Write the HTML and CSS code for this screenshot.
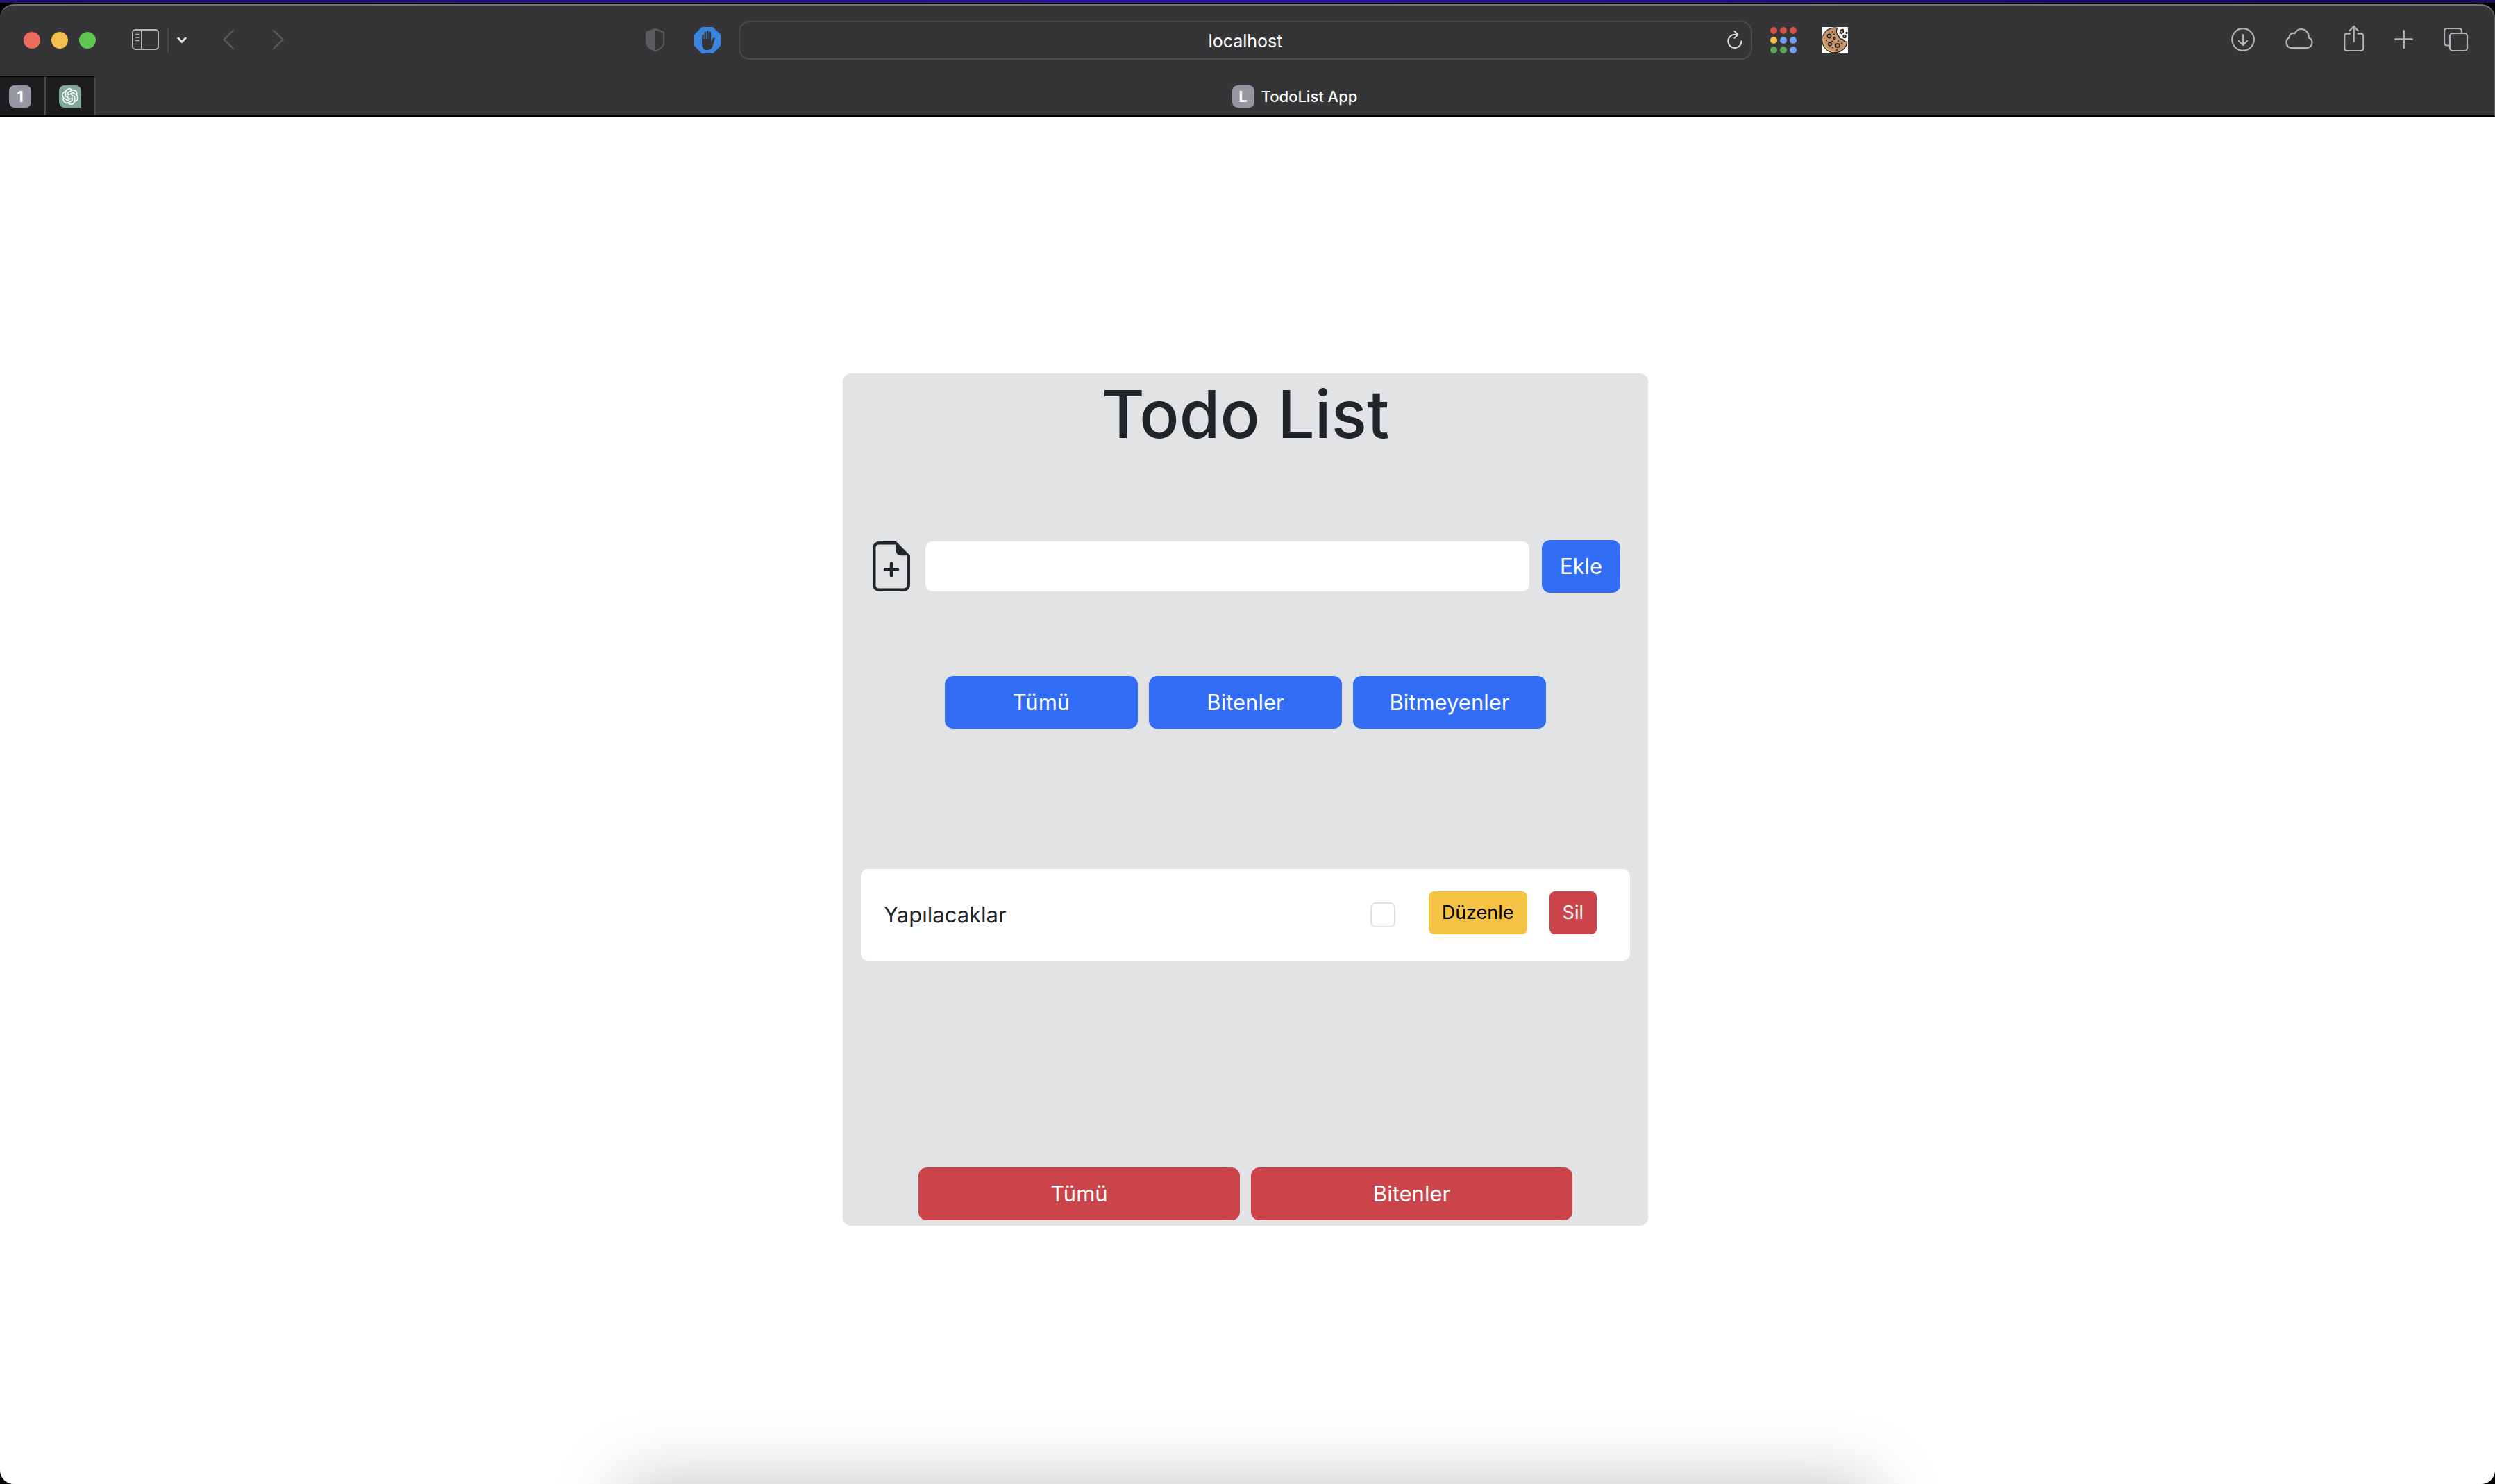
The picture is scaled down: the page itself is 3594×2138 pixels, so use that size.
FILE: index.html
```html
<!DOCTYPE html>
<html lang="tr">
<head>
<meta charset="utf-8">
<title>TodoList App</title>
<meta name="viewport" content="width=device-width, initial-scale=1">
<link rel="stylesheet" href="styles.css">
</head>
<body>
<div class="window">
  <header class="chrome">
    <div class="toolbar">
      <div class="toolbar-left">
        <div class="lights">
          <button class="light light-close" aria-label="Close"></button>
          <button class="light light-min" aria-label="Minimize"></button>
          <button class="light light-full" aria-label="Full screen"></button>
        </div>
        <div class="sidebar-tools">
          <button class="tool" aria-label="Sidebar">
            <svg width="39" height="44" viewBox="0 0 39 44" fill="none" stroke="#b4b4b8" stroke-width="2"><rect x="1" y="7" width="37" height="28" rx="4"/><path d="M14 7v28"/><path d="M5.500 13.500h4.500M5.500 18h4.500M5.500 22.500h4.500" stroke-width="1.600" stroke-linecap="round"/></svg>
          </button>
          <span class="tool-divider"></span>
          <button class="tool" aria-label="Tab groups">
            <svg width="14" height="44" viewBox="0 0 14 44" fill="none" stroke="#e4e4e6" stroke-width="3" stroke-linecap="round" stroke-linejoin="round"><path d="M1.800 19 7 24.400 12.200 19"/></svg>
          </button>
        </div>
        <nav class="history" aria-label="History">
          <button class="tool" aria-label="Back">
            <svg width="16" height="44" viewBox="0 0 16 44" fill="none" stroke="#5b5b5f" stroke-width="2.400" stroke-linecap="round" stroke-linejoin="round"><path d="M15 8 1.500 21 15 34"/></svg>
          </button>
          <button class="tool" aria-label="Forward">
            <svg width="16" height="44" viewBox="0 0 16 44" fill="none" stroke="#5b5b5f" stroke-width="2.400" stroke-linecap="round" stroke-linejoin="round"><path d="M1 8 14.500 21 1 34"/></svg>
          </button>
        </nav>
        <div class="extensions">
          <button class="tool" aria-label="Privacy report">
            <svg width="28" height="44" viewBox="0 0 28 44"><path d="M14 6.200 25.300 10q1 .4 1 1.500v13c0 7-5.300 9.500-12.300 13C7 34 1.200 31.500 1.200 24.500v-13Q1.200 10.400 2.200 10Z" fill="none" stroke="#5b5b5f" stroke-width="2"/><path d="M14 5.200 1.700 9.200Q.2 10 .2 11.500v13c0 7.500 6 10.500 13.800 13.800Z" fill="#5b5b5f"/></svg>
          </button>
          <button class="tool" aria-label="Ad blocker">
            <svg width="38" height="44" viewBox="0 0 38 44"><path d="M11 3h16l11 11v16L27 41H11L0 30V14Z" fill="#3984e0"/><g stroke="#353537" stroke-width="2.600" stroke-linecap="round" fill="none"><path d="M12.500 15v14M15.900 11v15M19.400 9.500V26M22.900 11v15"/></g><path d="M11.200 20h13v4.500l2.500-5q1-1.700 3.300-.8l-3.700 12.500c-1 3.200-3.600 4.800-7.300 4.800-5 0-7.800-2.500-7.800-7.500Z" fill="#353537"/></svg>
          </button>
        </div>
      </div>
      <div class="address">
        <input class="address-input" type="text" value="localhost" aria-label="Address">
        <button class="tool reload" aria-label="Reload">
          <svg width="22" height="44" viewBox="0 0 22 44" fill="none" stroke="#dededf" stroke-width="2" stroke-linecap="round" stroke-linejoin="round"><path d="M14.500 13.800H11A9.600 9.600 0 1 0 20.500 23.300M10.500 9l5 4.800-5 5"/></svg>
        </button>
      </div>
      <div class="toolbar-right">
        <div class="extensions">
          <button class="tool" aria-label="Apps">
            <svg width="38" height="44" viewBox="0 0 38 44"><g fill="#d95140"><circle cx="5" cy="8" r="5"/><circle cx="19" cy="8" r="5"/><circle cx="33" cy="8" r="5"/></g><circle cx="5" cy="22" r="5" fill="#f2bf42"/><g fill="#729ef1"><circle cx="19" cy="22" r="5"/><circle cx="33" cy="22" r="5"/><circle cx="33" cy="36" r="5"/></g><g fill="#58a55c"><circle cx="5" cy="36" r="5"/><circle cx="19" cy="36" r="5"/></g></svg>
          </button>
          <button class="tool" aria-label="Cookies">
            <svg width="38" height="44" viewBox="0 0 38 44"><path d="M0 3h38v38H0z" fill="#fff"/><path d="M22.500 4.300A18 18 0 1 0 36.800 24.300c-3.300.2-5-1-6.300-4-3 .4-5-1-5.500-4-3.500-2-4.500-7-2.500-12Z" fill="#c6936f" stroke="#241a17" stroke-width="1.200"/><path d="M3 16c-3 11 4 21 14 22.500" fill="none" stroke="#e3b172" stroke-width="2"/><g fill="#b57f5c" stroke="#241a17" stroke-width="1.400"><circle cx="11" cy="16" r="2.700"/><circle cx="12" cy="27.500" r="2.200"/><circle cx="23" cy="29.500" r="2.800"/><circle cx="18.500" cy="19" r="1.300"/><path d="m27 7.500 4-1 .5 4-3 2-2-2Z"/><circle cx="33" cy="16.500" r="2"/><circle cx="36" cy="11.500" r="1"/></g><g fill="#241a17"><circle cx="16" cy="10" r="1"/><circle cx="18" cy="13.500" r="1"/><circle cx="7" cy="22" r="1"/><circle cx="15" cy="23.500" r="1"/><circle cx="24" cy="23" r="1"/><circle cx="29" cy="26.500" r="1"/><circle cx="16" cy="32.500" r="1"/><circle cx="22" cy="36" r="1"/></g></svg>
          </button>
        </div>
        <div class="actions">
          <button class="tool" aria-label="Downloads">
            <svg width="34" height="44" viewBox="0 0 34 44" fill="none" stroke="#b4b4b8" stroke-width="2.200" stroke-linecap="round" stroke-linejoin="round"><circle cx="17" cy="21" r="15.800"/><path d="M17 14v14M11 23l6 6 6-6"/></svg>
          </button>
          <button class="tool" aria-label="iCloud tabs">
            <svg width="42" height="44" viewBox="0 0 42 44" fill="none" stroke="#b4b4b8" stroke-width="2.200" stroke-linejoin="round"><path d="M9 33A8 8 0 0 1 6.500 18.200C6.500 13 11 11 14.500 12.300 17 7.500 21 6 24 6c6 0 10.800 4.500 10.800 12.500C38 19.500 39.500 22.500 39.500 25.500c0 4-3 7.500-7.500 7.500Z"/></svg>
          </button>
          <button class="tool" aria-label="Share">
            <svg width="30" height="44" viewBox="0 0 30 44" fill="none" stroke="#b4b4b8" stroke-width="2.200" stroke-linecap="round" stroke-linejoin="round"><path d="M9 12.700H5q-3.800 0-3.800 3.800v16.700q0 3.800 3.800 3.800h19.500q3.800 0 3.800-3.800V16.500q0-3.800-3.800-3.800h-4M14.700 24V2.500M8.500 8.200l6.200-6.200 6.200 6.200"/></svg>
          </button>
          <button class="tool" aria-label="New tab">
            <svg width="28" height="44" viewBox="0 0 28 44" fill="none" stroke="#b4b4b8" stroke-width="2.800" stroke-linecap="round"><path d="M13.500 8.500v24.500M1.500 20.700h24"/></svg>
          </button>
          <button class="tool" aria-label="Tab overview">
            <svg width="36" height="44" viewBox="0 0 36 44" fill="none" stroke="#b4b4b8" stroke-width="2.200"><rect x="9" y="12" width="25" height="25" rx="4"/><path d="M9 29.500H5q-4 0-4-4V9q0-4 4-4h17q4 0 4 4v3"/></svg>
          </button>
        </div>
      </div>
    </div>
    <div class="tabs">
      <button class="pinned pinned-first"><span class="badge">1</span></button>
      <button class="pinned" aria-label="ChatGPT">
        <svg width="32" height="32" viewBox="0 0 32 32"><path d="M8 0h16a8 8 0 0 1 8 8v24H8a8 8 0 0 1-8-8V8a8 8 0 0 1 8-8Z" fill="#80a79c"/><g transform="translate(4 4)" fill="#fff"><path d="M22.282 9.821a5.985 5.985 0 0 0-.516-4.910 6.046 6.046 0 0 0-6.510-2.900A6.065 6.065 0 0 0 4.981 4.182a5.985 5.985 0 0 0-3.998 2.900 6.046 6.046 0 0 0 .743 7.097 5.980 5.980 0 0 0 .510 4.911 6.051 6.051 0 0 0 6.515 2.900A5.985 5.985 0 0 0 13.260 24a6.056 6.056 0 0 0 5.772-4.206 5.990 5.990 0 0 0 3.997-2.900 6.056 6.056 0 0 0-.747-7.073zM13.260 22.430a4.476 4.476 0 0 1-2.876-1.040l.141-.081 4.779-2.758a.795.795 0 0 0 .392-.681v-6.737l2.020 1.168a.071.071 0 0 1 .038.052v5.583a4.504 4.504 0 0 1-4.494 4.494zM3.600 18.304a4.470 4.470 0 0 1-.535-3.014l.142.085 4.783 2.759a.771.771 0 0 0 .780 0l5.843-3.369v2.332a.080.080 0 0 1-.033.062L9.740 19.950a4.499 4.499 0 0 1-6.140-1.646zM2.340 7.896a4.485 4.485 0 0 1 2.366-1.973V11.600a.766.766 0 0 0 .388.676l5.815 3.355-2.020 1.168a.076.076 0 0 1-.071 0l-4.830-2.786A4.504 4.504 0 0 1 2.340 7.872zm16.597 3.855l-5.833-3.387L15.119 7.200a.076.076 0 0 1 .071 0l4.830 2.791a4.494 4.494 0 0 1-.676 8.105v-5.678a.790.790 0 0 0-.407-.667zm2.010-3.023l-.141-.085-4.774-2.782a.776.776 0 0 0-.785 0L9.409 9.230V6.897a.066.066 0 0 1 .028-.061l4.830-2.787a4.499 4.499 0 0 1 6.680 4.660zM8.307 12.863l-2.020-1.164a.080.080 0 0 1-.038-.057V6.075a4.499 4.499 0 0 1 7.375-3.453l-.142.080L8.704 5.460a.795.795 0 0 0-.393.681zm1.097-2.365l2.602-1.500 2.607 1.500v2.999l-2.597 1.500-2.607-1.500z"/></g></svg>
      </button>
      <button class="tab"><span class="badge">L</span>TodoList App</button>
    </div>
  </header>

  <main class="page">
    <section class="todo">
      <h1 class="todo-title">Todo List</h1>
      <form class="todo-form">
        <label class="todo-label" for="todo" aria-label="Yeni todo">
          <svg width="72" height="72" viewBox="0 0 16 16" fill="#212529"><path d="M8 6.500a.5.5 0 0 1 .5.5v1.500H10a.5.5 0 0 1 0 1H8.500V11a.5.5 0 0 1-1 0V9.500H6a.5.5 0 0 1 0-1h1.500V7a.5.5 0 0 1 .5-.5z"/><path d="M14 4.500V14a2 2 0 0 1-2 2H4a2 2 0 0 1-2-2V2a2 2 0 0 1 2-2h5.500L14 4.500zm-3 0A1.500 1.500 0 0 1 9.500 3V1H4a1 1 0 0 0-1 1v12a1 1 0 0 0 1 1h8a1 1 0 0 0 1-1V4.500h-2z"/></svg>
        </label>
        <input class="todo-input" id="todo" type="text">
        <button class="btn btn-primary btn-add" type="button">Ekle</button>
      </form>
      <div class="filters">
        <button class="btn btn-primary">Tümü</button>
        <button class="btn btn-primary">Bitenler</button>
        <button class="btn btn-primary">Bitmeyenler</button>
      </div>
      <ul class="list">
        <li class="task">
          <label class="task-name" for="task-1">Yapılacaklar</label>
          <input class="task-check" id="task-1" type="checkbox">
          <div class="task-actions">
            <button class="btn btn-small btn-warning">Düzenle</button>
            <button class="btn btn-small btn-danger">Sil</button>
          </div>
        </li>
      </ul>
      <div class="removals">
        <button class="btn btn-danger">Tümü</button>
        <button class="btn btn-danger">Bitenler</button>
      </div>
    </section>
    <div class="dock-shade"></div>
  </main>
</div>
</body>
</html>
```

FILE: styles.css
```css
* {
  box-sizing: border-box;
}

body {
  margin: 0;
  background: #000;
  color: #212529;
  font-family: Inter, "Liberation Sans", sans-serif;
  font-size: 31px;
  line-height: 48px;
}

button,
input {
  margin: 0;
  border: 0;
  padding: 0;
  font: inherit;
}

svg {
  display: block;
}

.window {
  display: flex;
  flex-direction: column;
  min-height: 100vh;
  padding-top: 6px;
  background: linear-gradient(90deg, #1d1470, #2a1ca5 50%, #170e5a) top / 100% 4px no-repeat;
}

/* Browser toolbar */

.chrome {
  border-top: 2px solid #747476;
  border-right: 2px solid #5c5c5e;
  border-bottom: 2px solid #000;
  border-radius: 20px 20px 0 0;
  background: #353537;
  overflow: hidden;
}

.toolbar {
  display: grid;
  grid-template-columns: 1064fr 1460fr 1068fr;
  align-items: center;
  height: 100px;
}

.tool {
  flex: none;
  background: none;
}

.toolbar-left {
  display: flex;
  align-items: center;
  gap: 52px;
  padding: 0 26px 0 34px;
}

.lights {
  display: flex;
  gap: 16px;
}

.light {
  width: 24px;
  height: 24px;
  border-radius: 50%;
}

.light-close {
  background: #ed6a5e;
}

.light-min {
  background: #f5bf4f;
}

.light-full {
  background: #61c554;
}

.sidebar-tools {
  display: flex;
  align-items: center;
  gap: 12px;
}

.tool-divider {
  width: 2px;
  height: 36px;
  background: #48484a;
}

.history {
  display: flex;
  gap: 56px;
}

.extensions {
  display: flex;
  gap: 42px;
}

.toolbar-left .extensions {
  margin-left: auto;
}

.address {
  display: flex;
  align-items: center;
  height: 56px;
  border: 2px solid #4b4b4d;
  border-radius: 16px;
  padding: 0 12px 0 34px;
}

.address-input {
  flex: 1;
  min-width: 0;
  padding-top: 2px;
  background: none;
  color: #fff;
  font-size: 25px;
  line-height: 32px;
  text-align: center;
}

.toolbar-right {
  display: flex;
  align-items: center;
  justify-content: space-between;
  padding: 0 36px 0 26px;
}

.toolbar-right .extensions {
  gap: 36px;
}

.actions {
  display: flex;
  gap: 43px;
}

/* Tab bar */

.tabs {
  display: flex;
  height: 58px;
  padding-top: 2px;
}

.pinned {
  display: flex;
  align-items: center;
  justify-content: center;
  width: 72px;
  border-top: 1px solid #000;
  border-right: 2px solid #48484a;
  background: #1d1d1f;
}

.pinned-first {
  width: 66px;
  padding-right: 6px;
}

.badge {
  width: 32px;
  height: 32px;
  border-radius: 8px;
  background: #9696a2;
  color: #fff;
  font-size: 22px;
  font-weight: 700;
  line-height: 32px;
  text-align: center;
}

.tab {
  display: flex;
  flex: 1;
  align-items: center;
  justify-content: center;
  gap: 10px;
  padding-top: 2px;
  background: none;
  color: #fff;
  font-size: 22px;
  font-weight: 500;
  line-height: 32px;
}

/* Page */

.page {
  position: relative;
  display: flex;
  flex: 1;
  align-items: center;
  justify-content: center;
  border-radius: 0 0 20px 20px;
  padding: 0 6px 2px 0;
  background: #fff;
  overflow: hidden;
}

.dock-shade {
  position: absolute;
  top: 100%;
  left: 25%;
  width: 50%;
  height: 200px;
  box-shadow: 0 0 100px rgba(0, 0, 0, 0.25);
}

.todo {
  width: 100%;
  max-width: 1160px;
  border-radius: 12px;
  padding-bottom: 8px;
  background: #e2e3e5;
}

.todo-title {
  margin: 0 0 122px;
  font-size: 95px;
  font-weight: 500;
  line-height: 118px;
  text-align: center;
}

.todo-form {
  display: flex;
  align-items: center;
  margin-bottom: 120px;
  padding: 0 40px 0 34px;
}

.todo-input {
  flex: 1;
  min-width: 0;
  height: 72px;
  margin: 0 18px 0 13px;
  border-radius: 10px;
  padding: 0 16px;
  background: #fff;
}

.btn {
  height: 76px;
  border-radius: 12px;
  color: #fff;
  text-align: center;
}

.btn-primary {
  background: #316cf4;
}

.btn-danger {
  background: #ca444a;
}

.btn-warning {
  background: #f4c343;
  color: #000;
}

.btn-small {
  height: 62px;
  border-radius: 8px;
  padding: 0 19px;
  font-size: 27px;
}

.btn-add {
  width: 113px;
}

.filters {
  display: grid;
  grid-template-columns: repeat(3, 1fr);
  gap: 16px;
  margin-bottom: 202px;
  padding: 0 147px;
}

.list {
  margin: 0 26px 298px;
  padding: 0;
  list-style: none;
}

.task {
  display: flex;
  align-items: center;
  height: 132px;
  border-radius: 10px;
  padding: 0 48px 0 33px;
  background: #fff;
}

.task-name {
  flex: 1;
}

.task-check {
  width: 36px;
  height: 36px;
  margin-right: 48px;
  border: 2px solid #dee2e6;
  border-radius: 8px;
  appearance: none;
}

.task-actions {
  display: flex;
  gap: 32px;
  padding-bottom: 6px;
}

.removals {
  display: grid;
  grid-template-columns: repeat(2, 1fr);
  gap: 16px;
  padding: 0 109px;
}
```
